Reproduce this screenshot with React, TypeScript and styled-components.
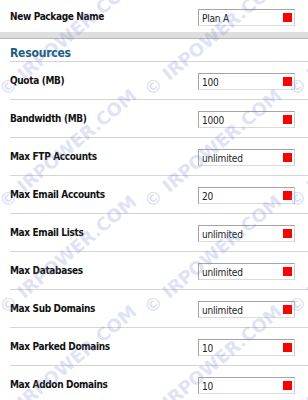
import styled, { createGlobalStyle } from "styled-components";

const GlobalStyle = createGlobalStyle`
  html, body {
    margin: 0;
    padding: 0;
    background: #ffffff;
  }
  body {
    font-family: "DejaVu Sans Condensed", "DejaVu Sans", Verdana, sans-serif;
    overflow: hidden;
  }
`;

const Page = styled.div`
  position: relative;
  width: 308px;
  height: 400px;
  overflow: hidden;
  background: #ffffff;
`;

const Row = styled.div<{ $top?: boolean }>`
  display: flex;
  align-items: flex-start;
  justify-content: space-between;
  margin-left: 10px;
  padding: ${({ $top }) => ($top ? "9px 13px 6px 0" : "11px 13px 9px 0")};
  border-bottom: ${({ $top }) => ($top ? "none" : "1px solid #d4d4d4")};
`;

const Label = styled.div`
  margin-top: 2px;
  font-size: 10px;
  line-height: 12px;
  font-weight: bold;
  color: #111111;
  letter-spacing: -0.35px;
`;

const Field = styled.div`
  position: relative;
  box-sizing: border-box;
  width: 97px;
  height: 17px;
  border: 1px solid #a4a4a4;
  border-right-color: #cfcfcf;
  border-bottom-color: #dadada;
  background: #ffffff;
  padding: 3px 0 0 3px;
  font-size: 10px;
  line-height: 12px;
  color: #222222;
  letter-spacing: -0.2px;
`;

const Required = styled.span`
  position: absolute;
  right: 2px;
  top: 3px;
  width: 9px;
  height: 9px;
  background: #ff0000;
`;

const Band = styled.div`
  height: 6px;
  background: #dedede;
  border-bottom: 1px solid #b6b6b6;
`;

const SectionTitle = styled.h2`
  margin: 7px 0 0 10px;
  padding: 0;
  border-bottom: 1px solid #d4d4d4;
  font-size: 12px;
  line-height: 15px;
  font-weight: bold;
  color: #1a5f7f;
  letter-spacing: -0.2px;
`;

const Watermark = styled.div`
  position: absolute;
  inset: 0;
  pointer-events: none;
`;

const Mark = styled.span`
  position: absolute;
  white-space: nowrap;
  font-family: "DejaVu Sans", Verdana, sans-serif;
  font-size: 18px;
  font-weight: bold;
  line-height: 20px;
  color: rgba(115, 125, 210, 0.24);
  transform: rotate(-40deg);
  transform-origin: left bottom;
`;

const resources = [
  { label: "Quota (MB)", value: "100" },
  { label: "Bandwidth (MB)", value: "1000" },
  { label: "Max FTP Accounts", value: "unlimited" },
  { label: "Max Email Accounts", value: "20" },
  { label: "Max Email Lists", value: "unlimited" },
  { label: "Max Databases", value: "unlimited" },
  { label: "Max Sub Domains", value: "unlimited" },
  { label: "Max Parked Domains", value: "10" },
  { label: "Max Addon Domains", value: "10" },
];

const marks: { x: number; y: number }[] = [];
[100, 212, 318, 428].forEach((y) => {
  [8, 153, 297].forEach((x) => marks.push({ x, y }));
});

const App = () => {
  return (
    <Page>
      <GlobalStyle />
      <Row $top>
        <Label>New Package Name</Label>
        <Field>
          Plan A
          <Required />
        </Field>
      </Row>
      <Band />
      <SectionTitle>Resources</SectionTitle>
      {resources.map((r) => (
        <Row key={r.label}>
          <Label>{r.label}</Label>
          <Field>
            {r.value}
            <Required />
          </Field>
        </Row>
      ))}
      <Watermark>
        {marks.map((m, i) => (
          <Mark key={i} style={{ left: m.x, top: m.y - 20 }}>
            © IRPOWER.COM
          </Mark>
        ))}
      </Watermark>
    </Page>
  );
};

export default App;
